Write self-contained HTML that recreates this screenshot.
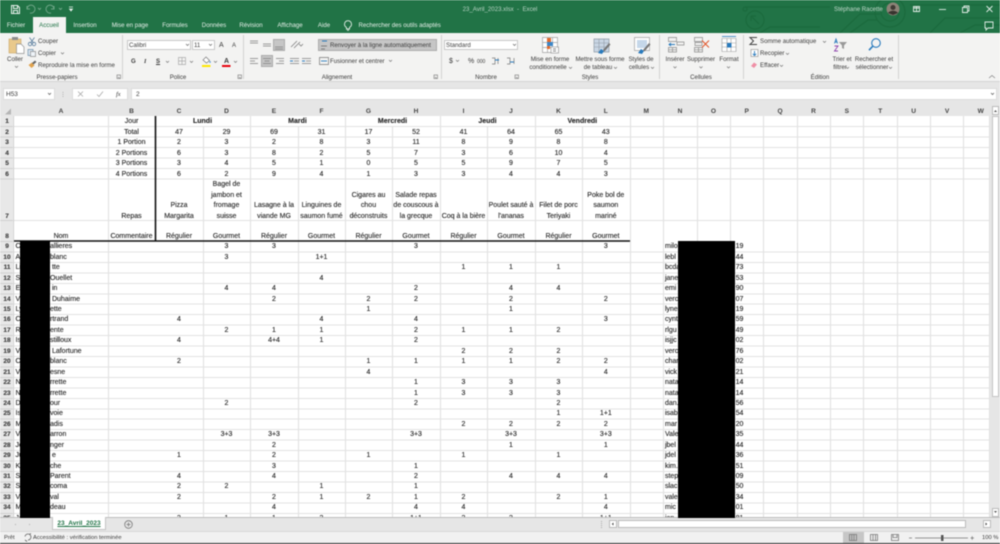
<!DOCTYPE html>
<html lang="fr"><head><meta charset="utf-8"><title>23_Avril_2023.xlsx - Excel</title>
<style>
html,body{margin:0;padding:0;background:#fff}
#w{position:relative;width:1000px;height:544px;overflow:hidden;background:#fff;font-family:"Liberation Sans",sans-serif;color:#444;filter:blur(.4px)}
.x{position:absolute}
.t{position:absolute;white-space:nowrap;font-size:6.1px;line-height:8px;color:#3c3c3c;margin-top:.8px}
.c{transform:translateX(-50%)}
.w{color:#e6efe9}
#sheet{position:absolute;left:0;top:116px;width:1000px;height:401px;overflow:hidden;font-size:7px;color:#262626;-webkit-text-stroke:.12px #262626}
.r{display:grid;grid-template-columns:14px 94px 47px 48px 47px 48px 47px 47px 48px 47px 48px 47px 47.6px 33.4px 34px 33px 33.4px 33.4px 33.4px 33.4px 33.4px 33.4px 33.4px 34px;height:10.45px;line-height:10.45px;white-space:nowrap}
.r u{text-decoration:none;text-align:center;grid-row:1;min-width:0;position:relative;top:1.4px}
.h{grid-column:1;font-size:6.5px;color:#444;font-weight:bold}
.a{grid-column:2;text-align:left!important;padding-left:1.5px}
.s{grid-column:2;text-align:left!important;padding-left:36px}
.b{grid-column:3}.cc{grid-column:4}.d{grid-column:5}.e{grid-column:6}.f{grid-column:7}.g{grid-column:8}.hh{grid-column:9}.i{grid-column:10}.j{grid-column:11}.k{grid-column:12}.l{grid-column:13}
.n{grid-column:15;text-align:left!important;padding-left:2px}
.p{grid-column:17;text-align:left!important;padding-left:5.6px}
.tall{height:41px}.tall u{align-self:end;line-height:10.4px;white-space:normal;padding-bottom:.3px}
.tw{height:21px}.tw u{align-self:end}
.six{height:10.5px;line-height:10.5px}
.m2{grid-column:span 2;font-weight:bold}
#hd{position:absolute;left:0;top:106px;width:1000px;height:10px;background:#e6e6e6;font-size:6.6px;color:#444;font-weight:bold}
#hd .r{height:10px;line-height:10.5px}
.box{position:absolute;background:#fff;border:1px solid #c8c8c8;box-sizing:border-box}
</style></head><body><div id="w">

<!-- title bar -->
<div class="x" style="left:0;top:0;width:1000px;height:33px;background:#217346"></div>
<svg class="x" style="left:0;top:0" width="1000" height="33" fill="none">
<g stroke="#1b6a3d" stroke-width="1.2">
<path d="M745 7H830M745 7a2 2 0 1 0 .1 0M840 33L860 14H880M850 33L868 20H877M930 33L945 18H1000M960 33L975 25H1000M910 5H1000"/>
<circle cx="755" cy="20" r="9"/><path d="M751 16l8 8M751 16h5M751 16v5"/>
<circle cx="890" cy="12" r="15"/><circle cx="890" cy="12" r="9"/><path d="M760 33l10-6h50"/>
</g>
<g stroke="#e8f0eb" fill="none" stroke-width="1">
<path d="M11.5 5.5h6l2 2v6h-8zM13.5 5.5v3h4v-3M13.5 13.5v-3h4v3"/>
</g>
<g stroke="#6fa587" fill="none" stroke-width="1">
<path d="M27 9a4 4 0 1 1 3 4M27 6v3h3M54 9a4 4 0 1 0-3 4M54 6v3h-3"/>
<path d="M38 8l1.5 1.5L41 8M59 8l1.5 1.5L62 8"/>
</g>
<path d="M69 7h4M69.5 9h3l-1.500 2z" stroke="#e8f0eb" stroke-width=".8" fill="#e8f0eb"/>
<g stroke="#e0ebe5" fill="none" stroke-width=".9">
<path d="M913.500 6.500h6v5h-6zM916.500 6.500v5M913.500 8h6"/>
<path d="M939 9.500h7"/>
<path d="M962.500 7.500h5v5h-5zM964 7.500v-1.500h5v5h-1.500"/>
<path d="M986.500 6l6 6M992.500 6l-6 6"/>
<path d="M985 22h8v6h-5l-2 2v-2h-1z"/>
</g>
<circle cx="893" cy="9" r="6.500" fill="#8c8377"/><circle cx="893" cy="7.500" r="2.500" fill="#3f3a34"/><path d="M888 13c2-3 8-3 10 0l-5 2z" fill="#38342f"/>
</svg>
<span class="t w c" style="left:500px;top:5px;color:#b9d3c4">23_Avril_2023.xlsx&nbsp; - &nbsp;Excel</span>
<span class="t w" style="left:834px;top:5px;color:#c3d9cc">Stéphane Racette</span>

<!-- tabs -->
<div class="x" style="left:33px;top:17px;width:33px;height:17px;background:#f3f3f2"></div>
<span class="t w c" style="left:16px;top:21.500px">Fichier</span>
<span class="t c" style="left:49px;top:21.500px;color:#217346">Accueil</span>
<span class="t w c" style="left:85px;top:21.500px">Insertion</span>
<span class="t w c" style="left:130px;top:21.500px">Mise en page</span>
<span class="t w c" style="left:175px;top:21.500px">Formules</span>
<span class="t w c" style="left:214px;top:21.500px">Données</span>
<span class="t w c" style="left:251px;top:21.500px">Révision</span>
<span class="t w c" style="left:290px;top:21.500px">Affichage</span>
<span class="t w c" style="left:324px;top:21.500px">Aide</span>
<span class="t w" style="left:358.500px;top:21.500px">Rechercher des outils adaptés</span>
<svg class="x" style="left:343px;top:20px" width="10" height="11" fill="none" stroke="#e6efe9" stroke-width=".9"><path d="M3.500 7.500C2 6.500 1.500 5.500 1.500 4.200a3.500 3.500 0 0 1 7 0C8.500 5.500 8 6.500 6.500 7.500v1.500h-3zM4 10.300h2"/></svg>

<!-- ribbon -->
<div class="x" style="left:0;top:33px;width:1000px;height:48px;background:#f3f3f2"></div>
<div class="x" style="left:0;top:81px;width:1000px;height:25px;background:#e6e6e6;border-top:1px solid #d4d4d4;box-sizing:border-box"></div>
<div class="x" style="left:318px;top:39px;width:119px;height:12px;background:#c6c6c6;border:1px solid #ababab;box-sizing:border-box"></div>
<div class="x" style="left:273px;top:39px;width:12px;height:12px;background:#c6c6c6;border:1px solid #ababab;box-sizing:border-box"></div>
<div class="x" style="left:261px;top:55px;width:12px;height:12px;background:#c6c6c6;border:1px solid #ababab;box-sizing:border-box"></div>
<div class="box" style="left:127px;top:40px;width:64px;height:10px"></div>
<div class="box" style="left:192px;top:40px;width:23px;height:10px"></div>
<div class="box" style="left:444px;top:40px;width:74px;height:10px"></div>

<svg class="x" style="left:0;top:33px" width="1000" height="48" viewBox="0 33 1000 48" fill="none">
<!-- group separators -->
<g stroke="#d2d2d2"><path d="M122.500 35V79M243.500 35V79M441.500 35V79M659.500 35V79M743.500 35V79M898.500 35V79"/></g>
<!-- dialog launchers -->
<g stroke="#888" stroke-width=".7"><path d="M117 75h3.500v3.500h-3.500zM118 77l2 1.500M238 75h3.500v3.500h-3.500zM239 77l2 1.500M434 75h3.500v3.500h-3.500zM435 77l2 1.500M515 75h3.500v3.500h-3.500zM516 77l2 1.500"/></g>
<!-- clipboard -->
<rect x="9" y="39" width="12" height="14" fill="#e9c98c" stroke="#c9a76a" stroke-width=".6"/>
<rect x="12" y="37" width="6" height="3" fill="#8d8d8d"/>
<path d="M16.500 44h4.500l3 3v6.500h-7.500z" fill="#fff" stroke="#8f8f8f" stroke-width=".7"/>
<path d="M15 66l1.500 1.500 1.500-1.500" stroke="#777" stroke-width=".7"/>
<!-- scissors -->
<g stroke="#5b7f9f" stroke-width=".8"><path d="M29.500 37.500l4 5.500M34.500 37.500l-4 5.500"/><circle cx="30" cy="44" r="1.700"/><circle cx="34" cy="44" r="1.700"/></g>
<!-- copy -->
<path d="M28 49.500h5v6h-5z" fill="#dbe7f2" stroke="#6f8faa" stroke-width=".7"/><path d="M30.500 51.500h5v5h-5z" fill="#eef3f8" stroke="#8f8f8f" stroke-width=".7"/>
<path d="M61 52.500l1.500 1.500 1.500-1.500" stroke="#777" stroke-width=".7"/>
<!-- brush -->
<path d="M28.500 65l3.500-2.500 2.500 3-3 2.500z" fill="#e0a24d"/><path d="M32 63l3-2.500 1.500 1.500-3 2.500z" fill="#666"/>
<!-- font -->
<path d="M186 44l1.500 1.500 1.500-1.500M209 44l1.500 1.500 1.500-1.500M513 44l1.500 1.500 1.500-1.500" stroke="#666" stroke-width=".7"/>
<path d="M166 61l1.500 1.500 1.500-1.500M190 61l1.500 1.500 1.500-1.500M214 61l1.500 1.500 1.500-1.500M234 61l1.500 1.500 1.500-1.500" stroke="#777" stroke-width=".7"/>
<!-- borders -->
<path d="M178.500 57.500h7v7h-7zM182 57.500v7M178.500 61h7" stroke="#aaa" stroke-width=".7"/>
<!-- fill -->
<path d="M203 60l3-3 3.500 3.500-3 2.500z" fill="#fff" stroke="#777" stroke-width=".7"/><circle cx="210" cy="62" r=".9" fill="#5c9fd6"/>
<rect x="202" y="65" width="8.500" height="2" fill="#ffe800"/>
<rect x="222" y="65" width="8.500" height="2" fill="#e8000b"/>
<!-- align lines -->
<g stroke="#808080" stroke-width=".8">
<path d="M250 41h8M250 43h8M263 44h8M263 46h8M275 47h8M275 49h8"/>
<path d="M250 58.500h8M250 61h5M250 63.500h8M263 58.500h8M264.500 61h5M263 63.500h8M276 58.500h8M279 61h5M276 63.500h8"/>
<path d="M290 58.500h9M294 61h5M290 63.500h9M302 58.500h9M306 61h5M302 63.500h9"/>
<path d="M291 47l6-6M294 48l6-6M299 44l2 2 2-2"/>
</g>
<path d="M290 61h3M305 61h-3" stroke="#2a7bbd" stroke-width="1"/>
<!-- wrap & merge -->
<path d="M321 46h6M321 49h4" stroke="#666" stroke-width=".8"/><path d="M322 41h5" stroke="#2a7bbd" stroke-width="1"/>
<path d="M319.500 57.500h9v7h-9z" stroke="#777" stroke-width=".7"/><path d="M321 61h6" stroke="#2a7bbd" stroke-width=".9"/>
<path d="M389 60l1.500 1.500 1.500-1.500" stroke="#777" stroke-width=".7"/>
<!-- number extras -->
<path d="M456 60l1.500 1.500 1.500-1.500" stroke="#777" stroke-width=".7"/>
<path d="M492 58h3v6h-3M498 58v6M507 58h3v6h-3M514 58v6" stroke="#777" stroke-width=".7"/>
<path d="M495 60h4M510 62h4" stroke="#2a7bbd" stroke-width=".9"/>
<!-- cond format -->
<path d="M542.500 37.500h15v15h-15zM547.500 37.500v15M552.500 37.500v15M542.500 42.500h15M542.500 47.500h15" stroke="#a0a0a0" stroke-width=".7" fill="#fff"/>
<rect x="547" y="38" width="4" height="5" fill="#e26a2c"/><rect x="547" y="42" width="6" height="4" fill="#3d86c6"/><rect x="547" y="46" width="3" height="3" fill="#e26a2c"/>
<rect x="551" y="47" width="7.500" height="6" fill="#fff" stroke="#888" stroke-width=".6"/><path d="M553 49h3M553 51h3" stroke="#666" stroke-width=".7"/>
<!-- table style -->
<path d="M594 39h15v13h-15z" fill="#c9d6e4" stroke="#8f9aa5" stroke-width=".7"/><path d="M594 43h15M594 47h15M599 39v13M604 39v13" stroke="#8f9aa5" stroke-width=".6"/>
<path d="M598 53l3-4 3 2-2 3z" fill="#2a7bbd"/><path d="M603 50l6-7 1.500 1.500-6 7z" fill="#777"/>
<!-- cell style -->
<path d="M634.500 37.500h15v13h-15z" fill="#fff" stroke="#a0a0a0" stroke-width=".7"/><rect x="637" y="40" width="10" height="8" fill="#c5d7e9"/>
<path d="M638 53l3-4 3 2-2 3z" fill="#2a7bbd"/><path d="M643 50l6-7 1.500 1.500-6 7z" fill="#777"/>
<!-- insert -->
<g stroke="#8a8a8a" stroke-width=".7"><path d="M668.500 37.500h8v4h-8zM668.500 47.500h8v4.500h-8zM672.500 47.500v4.500M668.500 49.800h8M677 42h7v3h-7z"/></g>
<path d="M669 44.500h6M671 43l-2 1.500 2 1.500" stroke="#2a7bbd" stroke-width=".9"/>
<!-- delete -->
<g stroke="#8a8a8a" stroke-width=".7"><path d="M694.500 37.500h8v4h-8zM694.500 47.500h8v4.500h-8zM698.500 47.500v4.500M694.500 49.800h8M695 42.500h7v3h-7z"/></g>
<path d="M702 40.500l7 7M709 40.500l-7 7" stroke="#e0552a" stroke-width="1"/>
<!-- format -->
<path d="M722 38.500h14v13h-14zM722 43h14M722 47h14M727 38.500v13M731 38.500v13" stroke="#999" stroke-width=".6" fill="#fff"/><rect x="727" y="43" width="4.500" height="4.500" fill="#2a7bbd"/><path d="M722 36.500h14" stroke="#2a7bbd" stroke-width=".8"/>
<!-- chevrons -->
<g stroke="#777" stroke-width=".7">
<path d="M569 67l1.500 1.500 1.500-1.500M614 67l1.500 1.500 1.500-1.500M651 67l1.500 1.500 1.500-1.500M673.500 66.500l1.500 1.500 1.500-1.500M699.500 66.500l1.500 1.500 1.500-1.500M727 66.500l1.500 1.500 1.500-1.500M846 67l1.500 1.500 1.500-1.500M889 67l1.500 1.500 1.500-1.500M823 41l1.500 1.500 1.500-1.500M786 53l1.500 1.500 1.500-1.500M780 65l1.500 1.500 1.500-1.500"/>
</g>
<!-- sum -->
<path d="M757 37.500h-7l3.500 3.500-3.500 3.500h7" stroke="#444" stroke-width="1"/>
<rect x="751" y="49.500" width="7" height="7" fill="#fff" stroke="#999" stroke-width=".7"/><path d="M754.500 51v4M752.800 53.800l1.700 1.700 1.700-1.700" stroke="#2a7bbd" stroke-width=".9"/>
<path d="M751 66l3-3.500 3 2-3 3.500z" fill="#ef8fa6"/>
<!-- sort -->
<path d="M834.500 43.500l1.500-4.500 1.500 4.500M835 42h2" stroke="#2a7bbd" stroke-width=".9"/>
<path d="M834.500 46h3.500l-3.500 5h3.500" stroke="#8e44ad" stroke-width=".9"/>
<path d="M839 42h8l-3 3.500v3.500l-2-1v-2.500z" fill="#999"/>
<!-- search -->
<circle cx="876" cy="43" r="4.300" stroke="#2a7bbd" stroke-width="1.100"/><path d="M872.800 46.200l-3.800 4" stroke="#2a7bbd" stroke-width="1.600"/>
<path d="M989 78l3-2.500 3 2.500" stroke="#888" stroke-width=".8"/>
</svg>

<span class="t" style="left:38px;top:37px">Couper</span>
<span class="t" style="left:38px;top:49px">Copier</span>
<span class="t" style="left:38px;top:61px">Reproduire la mise en forme</span>
<span class="t c" style="left:15px;top:55px">Coller</span>
<span class="t c" style="left:57px;top:73px">Presse-papiers</span>
<span class="t" style="left:129px;top:41px">Calibri</span>
<span class="t" style="left:194px;top:41px">11</span>
<span class="t" style="left:219px;top:41px;font-size:7px">A</span><span class="t" style="left:232px;top:41px;font-size:6px">A</span>
<span class="t" style="left:131px;top:57px;font-weight:bold">G</span>
<span class="t" style="left:144px;top:57px;font-style:italic;font-family:'Liberation Serif',serif;font-weight:bold">I</span>
<span class="t" style="left:156px;top:57px;font-weight:bold;text-decoration:underline">S</span>
<span class="t" style="left:224px;top:57px;font-weight:bold;font-size:7px">A</span>
<span class="t c" style="left:178px;top:73px">Police</span>
<span class="t" style="left:330px;top:41px">Renvoyer à la ligne automatiquement</span>
<span class="t" style="left:330px;top:57px">Fusionner et centrer</span>
<span class="t c" style="left:337px;top:73px">Alignement</span>
<span class="t" style="left:446px;top:41px">Standard</span>
<span class="t" style="left:449px;top:57px;font-size:7px">$</span>
<span class="t" style="left:468px;top:57px;font-size:7px">%</span>
<span class="t" style="left:477px;top:57px;font-size:5px">000</span>
<span class="t c" style="left:486px;top:73px">Nombre</span>
<span class="t c" style="left:550px;top:55px">Mise en forme</span>
<span class="t c" style="left:548px;top:63px">conditionnelle</span>
<span class="t c" style="left:600px;top:55px">Mettre sous forme</span>
<span class="t c" style="left:598px;top:63px">de tableau</span>
<span class="t c" style="left:641px;top:55px">Styles de</span>
<span class="t c" style="left:639px;top:63px">cellules</span>
<span class="t c" style="left:590px;top:73px">Styles</span>
<span class="t c" style="left:675px;top:55px">Insérer</span>
<span class="t c" style="left:701px;top:55px">Supprimer</span>
<span class="t c" style="left:729px;top:55px">Format</span>
<span class="t c" style="left:701px;top:73px">Cellules</span>
<span class="t" style="left:760px;top:37px">Somme automatique</span>
<span class="t" style="left:760px;top:49px">Recopier</span>
<span class="t" style="left:760px;top:61px">Effacer</span>
<span class="t c" style="left:842px;top:55px">Trier et</span>
<span class="t c" style="left:840px;top:63px">filtrer</span>
<span class="t c" style="left:874px;top:55px">Rechercher et</span>
<span class="t c" style="left:872px;top:63px">sélectionner</span>
<span class="t c" style="left:820px;top:73px">Édition</span>

<!-- formula bar -->
<div class="box" style="left:3px;top:88px;width:52px;height:12px;border-color:#dcdcdc"></div>
<div class="box" style="left:72px;top:88px;width:56px;height:12px;border-color:#dcdcdc"></div>
<div class="box" style="left:131px;top:88px;width:866px;height:12px;border-color:#dcdcdc"></div>
<span class="t" style="left:6px;top:90px;font-size:6.500px">H53</span>
<span class="t" style="left:136px;top:90px;font-size:6.500px">2</span>
<span class="t" style="left:116px;top:90px;font-size:6.500px;font-style:italic;font-family:'Liberation Serif',serif">fx</span>
<svg class="x" style="left:0;top:85px" width="1000" height="20" fill="none" stroke-width=".8">
<path d="M48 8l1.500 1.500L51 8M991 8l1.500 1.500L994 8" stroke="#666"/>
<path d="M63 7v.8M63 9v.8M63 11v.8" stroke="#999"/>
<path d="M78 6.500l5 5M83 6.500l-5 5M97 9.500l2 2 4-5" stroke="#aaa"/>
</svg>

<!-- grid lines -->
<svg class="x" style="left:0;top:0" width="1000" height="544" fill="none">
<g stroke="#e2e2e2" stroke-width="1.100">
<path d="M108.500 116V517M203.500 126V517M298.500 126V517M392.500 126V517M487.500 126V517M582.500 126V517M250.500 116V517M345.500 116V517M440.500 116V517M535.500 116V517M630.500 116V517M663.500 116V517M697.500 116V517M730.500 116V517M763.500 116V517M797.500 116V517M830.500 116V517M863.500 116V517M897.500 116V517M930.500 116V517M963.500 116V517M989.500 116V517"/>
<path d="M14 126.500H990M14 137H990M14 147.500H990M14 158H990M14 168.500H990M14 179H990M14 220.500H990M14 252H990M14 262.500H990M14 273H990M14 283.500H990M14 294H990M14 304H990M14 314.500H990M14 325H990M14 335.500H990M14 346H990M14 356.500H990M14 367H990M14 377.500H990M14 388H990M14 398.500H990M14 409H990M14 419H990M14 429.500H990M14 440H990M14 450.500H990M14 461H990M14 471.500H990M14 482H990M14 492.500H990M14 503H990M14 513.500H990"/>
</g>
<g stroke="#c0c0c0"><path d="M14.500 107V116M108.500 107V116M155.500 107V116M203.500 107V116M250.500 107V116M298.500 107V116M345.500 107V116M392.500 107V116M440.500 107V116M487.500 107V116M535.500 107V116M582.500 107V116M630.500 107V116M663.500 107V116M697.500 107V116M730.500 107V116M763.500 107V116M797.500 107V116M830.500 107V116M863.500 107V116M897.500 107V116M930.500 107V116M963.500 107V116"/><path d="M0 115.500H990M13.500 116V517"/></g>
<rect x="0" y="116" width="13.500" height="401" fill="#e8e8e8"/>
<path d="M0 126.500h13M0 137h13M0 147.500h13M0 158h13M0 168.500h13M0 179h13M0 220.500h13M0 241.500h13M0 252h13M0 262.500h13M0 273h13M0 283.500h13M0 294h13M0 304h13M0 314.500h13M0 325h13M0 335.500h13M0 346h13M0 356.500h13M0 367h13M0 377.500h13M0 388h13M0 398.500h13M0 409h13M0 419h13M0 429.500h13M0 440h13M0 450.500h13M0 461h13M0 471.500h13M0 482h13M0 492.500h13M0 503h13M0 513.500h13" stroke="#d0d0d0"/>
<path d="M155.500 116V241.500" stroke="#111" stroke-width="1.600"/>
<path d="M14 241H630" stroke="#111" stroke-width="1.500"/>
</svg>

<!-- column headers -->
<div id="hd"><div class="r"><u></u><u>A</u><u>B</u><u>C</u><u>D</u><u>E</u><u>F</u><u>G</u><u>H</u><u>I</u><u>J</u><u>K</u><u>L</u><u>M</u><u>N</u><u>O</u><u>P</u><u>Q</u><u>R</u><u>S</u><u>T</u><u>U</u><u>V</u><u>W</u></div></div>
<svg class="x" style="left:0;top:106px" width="14" height="10"><path d="M11 2.500V8.500H5z" fill="#b5b5b5"/></svg>

<div id="sheet">
<div class="r six"><u class="h">1</u><u class="b">Jour</u><u class="cc m2">Lundi</u><u class="e m2">Mardi</u><u class="g m2">Mercredi</u><u class="i m2">Jeudi</u><u class="k m2">Vendredi</u></div>
<div class="r six"><u class="h">2</u><u class="b">Total</u><u class="cc">47</u><u class="d">29</u><u class="e">69</u><u class="f">31</u><u class="g">17</u><u class="hh">52</u><u class="i">41</u><u class="j">64</u><u class="k">65</u><u class="l">43</u></div>
<div class="r six"><u class="h">3</u><u class="b">1 Portion</u><u class="cc">2</u><u class="d">3</u><u class="e">2</u><u class="f">8</u><u class="g">3</u><u class="hh">11</u><u class="i">8</u><u class="j">9</u><u class="k">8</u><u class="l">8</u></div>
<div class="r six"><u class="h">4</u><u class="b">2 Portions</u><u class="cc">6</u><u class="d">3</u><u class="e">8</u><u class="f">2</u><u class="g">5</u><u class="hh">7</u><u class="i">3</u><u class="j">6</u><u class="k">10</u><u class="l">4</u></div>
<div class="r six"><u class="h">5</u><u class="b">3 Portions</u><u class="cc">3</u><u class="d">4</u><u class="e">5</u><u class="f">1</u><u class="g">0</u><u class="hh">5</u><u class="i">5</u><u class="j">9</u><u class="k">7</u><u class="l">5</u></div>
<div class="r six"><u class="h">6</u><u class="b">4 Portions</u><u class="cc">6</u><u class="d">2</u><u class="e">9</u><u class="f">4</u><u class="g">1</u><u class="hh">3</u><u class="i">3</u><u class="j">4</u><u class="k">4</u><u class="l">3</u></div>
<div class="r tall"><u class="h">7</u><u class="b">Repas</u><u class="cc">Pizza Margarita</u><u class="d">Bagel de jambon et fromage suisse</u><u class="e">Lasagne à la viande MG</u><u class="f">Linguines de saumon fumé</u><u class="g">Cigares au chou déconstruits</u><u class="hh">Salade repas de couscous à la grecque</u><u class="i">Coq à la bière</u><u class="j">Poulet sauté à l'ananas</u><u class="k">Filet de porc Teriyaki</u><u class="l">Poke bol de saumon mariné</u></div>
<div class="r tw"><u class="h">8</u><u class="a" style="text-align:center!important;padding:0">Nom</u><u class="b">Commentaire</u><u class="cc">Régulier</u><u class="d">Gourmet</u><u class="e">Régulier</u><u class="f">Gourmet</u><u class="g">Régulier</u><u class="hh">Gourmet</u><u class="i">Régulier</u><u class="j">Gourmet</u><u class="k">Régulier</u><u class="l">Gourmet</u></div>
<div class="r"><u class="h">9</u><u class="a">Ca</u><u class="s">allieres</u><u class="d">3</u><u class="e">3</u><u class="hh">3</u><u class="l">3</u><u class="n">milo</u><u class="p">19</u></div>
<div class="r"><u class="h">10</u><u class="a">An</u><u class="s">blanc</u><u class="d">3</u><u class="f">1+1</u><u class="n">lebl</u><u class="p">44</u></div>
<div class="r"><u class="h">11</u><u class="a">Li</u><u class="s">&nbsp;tte</u><u class="i">1</u><u class="j">1</u><u class="k">1</u><u class="n">bcda</u><u class="p">73</u></div>
<div class="r"><u class="h">12</u><u class="a">Sa</u><u class="s">Ouellet</u><u class="f">4</u><u class="n">jane</u><u class="p">53</u></div>
<div class="r"><u class="h">13</u><u class="a">Er</u><u class="s">&nbsp;in</u><u class="d">4</u><u class="e">4</u><u class="hh">2</u><u class="j">4</u><u class="k">4</u><u class="n">emi</u><u class="p">90</u></div>
<div class="r"><u class="h">14</u><u class="a">Ve</u><u class="s">&nbsp;Duhaime</u><u class="e">2</u><u class="g">2</u><u class="hh">2</u><u class="j">2</u><u class="l">2</u><u class="n">verc</u><u class="p">07</u></div>
<div class="r"><u class="h">15</u><u class="a">Ly</u><u class="s">ette</u><u class="g">1</u><u class="j">1</u><u class="n">lyne</u><u class="p">19</u></div>
<div class="r"><u class="h">16</u><u class="a">Cy</u><u class="s">rtrand</u><u class="cc">4</u><u class="f">4</u><u class="hh">4</u><u class="l">3</u><u class="n">cynt</u><u class="p">59</u></div>
<div class="r"><u class="h">17</u><u class="a">Ri</u><u class="s">ente</u><u class="d">2</u><u class="e">1</u><u class="f">1</u><u class="hh">2</u><u class="i">1</u><u class="j">1</u><u class="k">2</u><u class="n">rlgu</u><u class="p">49</u></div>
<div class="r"><u class="h">18</u><u class="a">Is</u><u class="s">stilloux</u><u class="cc">4</u><u class="e">4+4</u><u class="f">1</u><u class="hh">2</u><u class="n">isjjc</u><u class="p">02</u></div>
<div class="r"><u class="h">19</u><u class="a">Ve</u><u class="s">&nbsp;Lafortune</u><u class="i">2</u><u class="j">2</u><u class="k">2</u><u class="n">verc</u><u class="p">76</u></div>
<div class="r"><u class="h">20</u><u class="a">Ch</u><u class="s">blanc</u><u class="cc">2</u><u class="g">1</u><u class="hh">1</u><u class="i">1</u><u class="j">1</u><u class="k">2</u><u class="l">2</u><u class="n">char</u><u class="p">02</u></div>
<div class="r"><u class="h">21</u><u class="a">Vi</u><u class="s">esne</u><u class="g">4</u><u class="l">4</u><u class="n">vick</u><u class="p">21</u></div>
<div class="r"><u class="h">22</u><u class="a">Na</u><u class="s">rrette</u><u class="hh">1</u><u class="i">3</u><u class="j">3</u><u class="k">3</u><u class="n">nata</u><u class="p">14</u></div>
<div class="r"><u class="h">23</u><u class="a">Na</u><u class="s">rrette</u><u class="hh">1</u><u class="i">3</u><u class="j">3</u><u class="k">3</u><u class="n">nata</u><u class="p">14</u></div>
<div class="r"><u class="h">24</u><u class="a">Da</u><u class="s">our</u><u class="d">2</u><u class="hh">2</u><u class="k">2</u><u class="n">dan.</u><u class="p">56</u></div>
<div class="r"><u class="h">25</u><u class="a">Is</u><u class="s">voie</u><u class="k">1</u><u class="l">1+1</u><u class="n">isab</u><u class="p">54</u></div>
<div class="r"><u class="h">26</u><u class="a">Ma</u><u class="s">adis</u><u class="i">2</u><u class="j">2</u><u class="k">2</u><u class="l">2</u><u class="n">mar</u><u class="p">20</u></div>
<div class="r"><u class="h">27</u><u class="a">Va</u><u class="s">arron</u><u class="d">3+3</u><u class="e">3+3</u><u class="hh">3+3</u><u class="j">3+3</u><u class="l">3+3</u><u class="n">Vale</u><u class="p">35</u></div>
<div class="r"><u class="h">28</u><u class="a">Jo</u><u class="s">nger</u><u class="e">2</u><u class="j">1</u><u class="l">1</u><u class="n">jbel</u><u class="p">44</u></div>
<div class="r"><u class="h">29</u><u class="a">Ju</u><u class="s">&nbsp;e</u><u class="cc">1</u><u class="e">2</u><u class="g">1</u><u class="i">1</u><u class="k">1</u><u class="n">jdel</u><u class="p">36</u></div>
<div class="r"><u class="h">30</u><u class="a">Ki</u><u class="s">che</u><u class="e">3</u><u class="hh">1</u><u class="n">kim.</u><u class="p">51</u></div>
<div class="r"><u class="h">31</u><u class="a">St</u><u class="s">Parent</u><u class="cc">4</u><u class="e">4</u><u class="hh">2</u><u class="j">4</u><u class="k">4</u><u class="l">4</u><u class="n">step</u><u class="p">09</u></div>
<div class="r"><u class="h">32</u><u class="a">Su</u><u class="s">coma</u><u class="cc">2</u><u class="d">2</u><u class="f">1</u><u class="hh">1</u><u class="n">slac</u><u class="p">50</u></div>
<div class="r"><u class="h">33</u><u class="a">Va</u><u class="s">val</u><u class="cc">2</u><u class="e">2</u><u class="f">1</u><u class="g">2</u><u class="hh">1</u><u class="i">2</u><u class="k">2</u><u class="l">1</u><u class="n">vale</u><u class="p">34</u></div>
<div class="r"><u class="h">34</u><u class="a">Ma</u><u class="s">deau</u><u class="e">4</u><u class="hh">4</u><u class="i">4</u><u class="l">4</u><u class="n">mic</u><u class="p">01</u></div>
<div class="r"><u class="h">35</u><u class="a">Ja</u><u class="cc">2</u><u class="d">1</u><u class="e">1</u><u class="f">2</u><u class="hh">1+1</u><u class="i">2</u><u class="j">2</u><u class="l">1+1</u><u class="n">jan</u><u class="p">81</u></div>
</div>

<!-- vertical scrollbar -->
<div class="x" style="left:990px;top:106px;width:10px;height:411px;background:#e6e6e6"></div>
<div class="box" style="left:992px;top:106px;width:7px;height:9px;border-color:#bbb"></div>
<div class="box" style="left:992px;top:116px;width:7px;height:281px;border-color:#c4c4c4"></div>
<div class="box" style="left:992px;top:508px;width:7px;height:9px;border-color:#bbb"></div>
<svg class="x" style="left:992px;top:106px" width="8" height="411"><path d="M2 6l1.500-2L5 6zM2 405l1.500 2L5 405z" fill="#555"/></svg>

<!-- sheet tabs bar -->
<div class="x" style="left:0;top:517px;width:1000px;height:14px;background:#e6e6e6;border-top:1px solid #bdbdbd;box-sizing:border-box"></div>
<div class="x" style="left:52px;top:517px;width:54px;height:13px;background:#fff;border:1px solid #c4c4c4;border-top:0;box-sizing:border-box"></div>
<span class="t c" style="left:79px;top:519.500px;font-weight:bold;color:#217346;font-size:6.500px;text-decoration:underline">23_Avril_2023</span>
<svg class="x" style="left:0;top:517px" width="140" height="14" fill="none"><path d="M16 6.500l-1.500 1 1.500 1zM29 6.500l1.500 1-1.500 1z" fill="#bbb"/><circle cx="128.500" cy="7.500" r="3.800" stroke="#777" stroke-width=".8"/><path d="M126.500 7.500h4M128.500 5.500v4" stroke="#777" stroke-width=".8"/></svg>
<div class="x" style="left:601px;top:521px;width:2px;height:7px;border-left:1px dotted #aaa"></div>
<div class="box" style="left:609px;top:520px;width:8px;height:8px;border-color:#bbb"></div>
<div class="box" style="left:618px;top:520px;width:348px;height:8px;border-color:#bbb"></div>
<div class="box" style="left:983px;top:520px;width:8px;height:8px;border-color:#bbb"></div>
<svg class="x" style="left:609px;top:520px" width="382" height="8"><path d="M4.500 2.500L2.800 4l1.700 1.500zM376.500 2.500L378.200 4l-1.700 1.500z" fill="#444"/></svg>

<!-- status bar -->
<div class="x" style="left:0;top:531px;width:1000px;height:12px;background:#f1f1f1;border-top:1px solid #d8d8d8;box-sizing:border-box"></div>
<div class="x" style="left:0;top:543px;width:1000px;height:1px;background:#222"></div>
<div class="x" style="left:843px;top:532px;width:21px;height:11px;background:#c6c6c6"></div>
<span class="t" style="left:4px;top:533px;font-size:5.800px">Prêt</span>
<span class="t" style="left:33px;top:533px;font-size:5.800px">Accessibilité : vérification terminée</span>
<span class="t" style="left:982px;top:533px;font-size:5.800px">100 %</span>
<svg class="x" style="left:0;top:531px" width="1000" height="13" fill="none" stroke-width=".8">
<path d="M25 5.500a3 3 0 1 1 3 3.500M25 9l2 1.500M29 3.500l2-1" stroke="#666"/>
<g stroke="#777"><path d="M849.500 3.500h7v6h-7zM851.800 3.500v6M854 3.500v6"/><path d="M870.500 3.500h7v6h-7zM873 3.500v6M875.500 3.500v6"/><path d="M891.500 3.500h7v6h-7zM893 3.500v3h4v-3"/></g>
<path d="M909 7h3M915 7h53M970.500 7h3.500M972.200 5.300v3.500" stroke="#777"/>
<rect x="941" y="4" width="2.500" height="6" fill="#555"/>
</svg>

<!-- redactions -->
<div class="x" style="left:20px;top:241px;width:30px;height:277px;background:#000"></div>
<div class="x" style="left:678px;top:241px;width:57px;height:277px;background:#000"></div>
</div></body></html>
